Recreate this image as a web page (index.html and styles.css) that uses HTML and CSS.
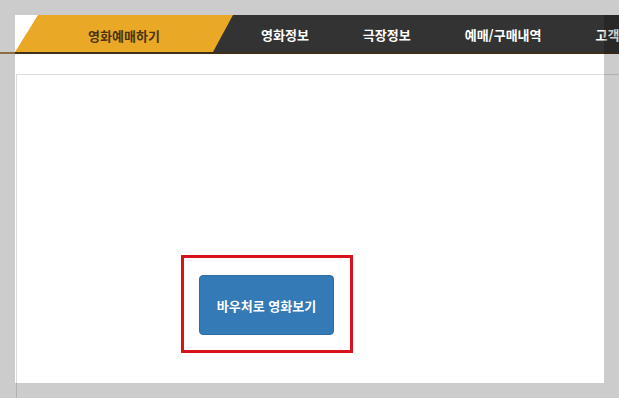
FILE: index.html
```html
<!DOCTYPE html>
<html lang="ko">
<head>
    <meta charset="UTF-8">
    <meta name="viewport" content="width=device-width, initial-scale=1.0">
    <title>영화예매하기</title>
    <link rel="stylesheet" href="styles.css">
</head>
<body>
    <div class="header">
        <div class="header-edge"></div>
        <div class="gnb">
            <a class="gnb-home" href="#">영화예매하기</a>
            <ul class="gnb-list">
                <li><a href="#">영화정보</a></li>
                <li><a href="#">극장정보</a></li>
                <li><a href="#">예매/구매내역</a></li>
                <li><a href="#">고객센터</a></li>
            </ul>
        </div>
    </div>

    <div class="content">
        <div class="panel">
            <div class="voucher-box">
                <button class="voucher-button">바우처로 영화보기</button>
            </div>
        </div>
    </div>

    <!-- dimmed overlay with a spotlight on the page -->
    <div class="spotlight"></div>
</body>
</html>
```

FILE: styles.css
```css
* {
    margin: 0;
    padding: 0;
    box-sizing: border-box;
    font-family: 'Noto Sans CJK KR', 'Malgun Gothic', sans-serif;
}

html, body {
    overflow: hidden;
}

body {
    background: #ffffff;
    padding-top: 15px;
    height: 100vh;
}

a {
    text-decoration: none;
}

ul {
    list-style: none;
}

.header {
    display: flex;
    height: 39px;
}

.header-edge {
    width: 15px;
    flex: none;
    border-bottom: 2px solid #b08a58;
}

.gnb {
    flex: 1;
    display: flex;
    overflow: hidden;
    background: linear-gradient(to right, #ffffff 100px, #333333 100px);
    border-bottom: 2px solid #3e3018;
}

.gnb-home {
    flex: none;
    width: 218px;
    line-height: 37px;
    padding-top: 2px;
    text-align: center;
    font-size: 13px;
    font-weight: bold;
    color: #4a3510;
    background: #e9a825;
    clip-path: polygon(23px 0, 100% 0, calc(100% - 20px) 100%, 0 100%);
}

.gnb-list {
    display: flex;
    padding-left: 1px;
    white-space: nowrap;
}

.gnb-list a {
    display: block;
    padding: 2px 27px 0;
    line-height: 35px;
    font-size: 13px;
    font-weight: bold;
    color: #ffffff;
}

.content {
    padding: 20px 0 0 16px;
}

.panel {
    height: 324px;
    border-top: 1px solid #dddddd;
    border-left: 1px solid #dddddd;
    padding: 180px 0 0 164px;
}

.voucher-box {
    display: inline-block;
    border: 3px solid #d7141a;
    padding: 17px 16px 15px 15px;
}

.voucher-button {
    display: block;
    width: 135px;
    height: 60px;
    border: 1px solid #2e6da4;
    border-radius: 4px;
    background: #337ab7;
    color: #ffffff;
    font-size: 13px;
    font-weight: bold;
    cursor: pointer;
}

.spotlight {
    position: absolute;
    left: 15px;
    top: 15px;
    width: 589px;
    height: 368px;
    box-shadow: 0 0 0 2000px rgba(0, 0, 0, 0.2);
    pointer-events: none;
}
```
